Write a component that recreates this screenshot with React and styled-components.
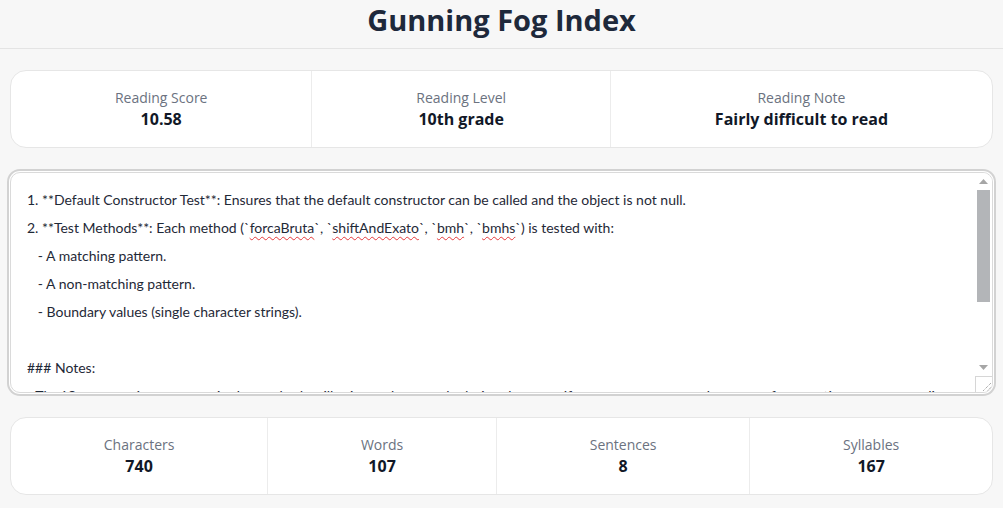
import styled, { createGlobalStyle } from 'styled-components';

const GlobalStyle = createGlobalStyle`
  * { box-sizing: border-box; }
  body {
    margin: 0;
    background: #f7f7f7;
    font-family: "Open Sans", "Noto Sans", sans-serif;
    color: #1f2937;
  }
`;

const Header = styled.header`
  height: 49px;
  border-bottom: 1px solid #e4e4e4;
  display: flex;
  align-items: center;
  justify-content: center;
`;

const Title = styled.h1`
  margin: -9px 0 0;
  font-size: 29px;
  font-weight: 700;
  color: #1e293b;
  line-height: 1;
`;

const Main = styled.main`
  display: flex;
  flex-direction: column;
  gap: 24px;
  padding: 21px 10px 0;
`;

const Card = styled.section`
  display: flex;
  background: #fff;
  border: 1px solid #e6e6e6;
  border-radius: 16px;
`;

const Stat = styled.div`
  flex: 1 1 auto;
  display: flex;
  flex-direction: column;
  align-items: center;
  padding: 17px 0;
  & + & {
    border-left: 1px solid #ececec;
  }
`;

const Label = styled.span`
  font-size: 14px;
  line-height: 20px;
  color: #6b7280;
`;

const Value = styled.strong`
  font-size: 16px;
  line-height: 22px;
  font-weight: 700;
  color: #111827;
`;

const TextFrame = styled.div`
  display: flex;
  height: 221px;
  background: #fff;
  border: 1px solid #dadada;
  border-radius: 10px;
  box-shadow: 0 0 0 1px #fff, 0 0 0 3px #d2d2d2;
  overflow: hidden;
`;

const TextContent = styled.div`
  flex: 1;
  padding: 13px 16px;
  font-family: Lato, "Open Sans", sans-serif;
  font-size: 14px;
  line-height: 28px;
  color: #1f2937;
  white-space: pre-wrap;
  overflow: hidden;
`;

const ScrollRail = styled.div`
  width: 17px;
  display: flex;
  flex-direction: column;
  background: #fff;
`;

const ArrowButton = styled.div`
  height: 17px;
  display: flex;
  align-items: center;
  justify-content: center;
`;

const Thumb = styled.div`
  height: 112px;
  margin: 0 2px;
  background: #b3b5b8;
`;

const RailSpace = styled.div`
  flex: 1;
`;

const Resizer = styled.div`
  height: 16px;
  border-top: 1px solid #d6d6d6;
  border-left: 1px solid #d6d6d6;
  display: flex;
  align-items: flex-end;
  justify-content: flex-end;
`;

const Typo = styled.span`
  text-decoration: underline wavy #e5393b;
  text-decoration-skip-ink: none;
  text-decoration-thickness: 1px;
  text-underline-offset: 3px;
`;

const readingStats = [
  { label: 'Reading Score', value: '10.58' },
  { label: 'Reading Level', value: '10th grade' },
  { label: 'Reading Note', value: 'Fairly difficult to read' },
];

const textStats = [
  { label: 'Characters', value: '740' },
  { label: 'Words', value: '107' },
  { label: 'Sentences', value: '8' },
  { label: 'Syllables', value: '167' },
];

function StatCard({ items }) {
  return (
    <Card>
      {items.map((item) => (
        <Stat key={item.label}>
          <Label>{item.label}</Label>
          <Value>{item.value}</Value>
        </Stat>
      ))}
    </Card>
  );
}

function Arrow({ down }) {
  return (
    <svg width="9" height="5" viewBox="0 0 9 5">
      <path d={down ? 'M0 0 L9 0 L4.5 5 Z' : 'M0 5 L9 5 L4.5 0 Z'} fill="#a6a6a6" />
    </svg>
  );
}

export default function App() {
  return (
    <>
      <GlobalStyle />
      <Header>
        <Title>Gunning Fog Index</Title>
      </Header>
      <Main>
        <StatCard items={readingStats} />
        <TextFrame>
          <TextContent>
            {'1. **Default Constructor Test**: Ensures that the default constructor can be called and the object is not null.\n'}
            {'2. **Test Methods**: Each method (`'}<Typo>forcaBruta</Typo>{'`, `'}<Typo>shiftAndExato</Typo>{'`, `'}<Typo>bmh</Typo>{'`, `'}<Typo>bmhs</Typo>{'`) is tested with:\n'}
            {'   - A matching pattern.\n'}
            {'   - A non-matching pattern.\n'}
            {'   - Boundary values (single character strings).\n\n'}
            {'### Notes:\n'}
            {'- The `System.out` statements in the methods will print to the console during the tests. If you want to capture the output for assertions, you can redirect `System.out` to a `ByteArrayOutputStream`.\n'}
            {'- Make sure the test class is in the same package as the class under test.'}
          </TextContent>
          <ScrollRail>
            <ArrowButton><Arrow /></ArrowButton>
            <Thumb />
            <RailSpace />
            <ArrowButton><Arrow down /></ArrowButton>
            <Resizer>
              <svg width="12" height="12" viewBox="0 0 12 12">
                <path d="M11 3 L3 11 M11 7 L7 11" stroke="#8a8a8a" strokeWidth="1" strokeDasharray="1 1" />
              </svg>
            </Resizer>
          </ScrollRail>
        </TextFrame>
        <StatCard items={textStats} />
      </Main>
    </>
  );
}
